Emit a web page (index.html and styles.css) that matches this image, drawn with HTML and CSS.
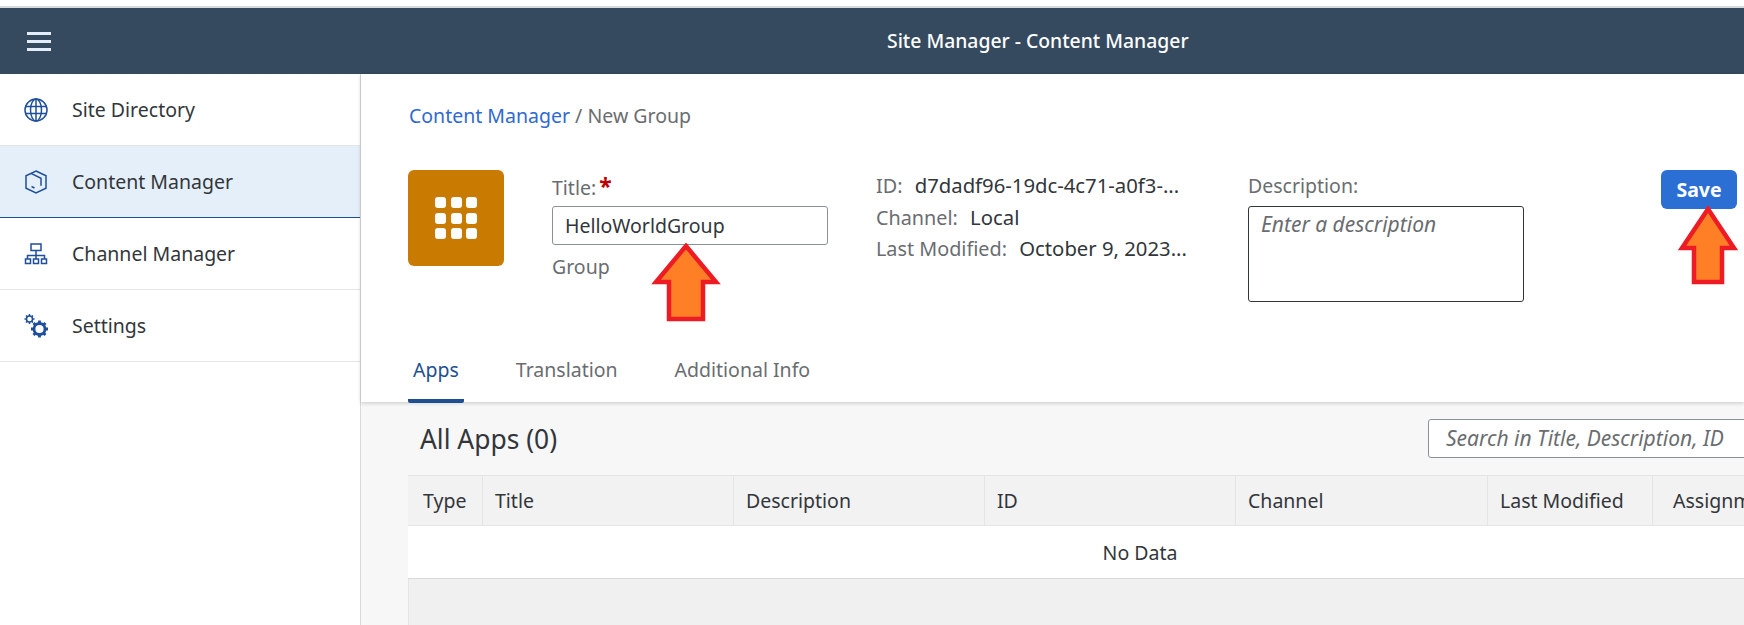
FILE: index.html
```html
<!DOCTYPE html>
<html lang="en">
<head>
  <meta charset="UTF-8" />
  <title>Site Manager - Content Manager</title>
  <link rel="stylesheet" href="styles.css">
</head>
<body>
  <div class="strip"></div>
  <header class="shell">
    <div class="burger"><span></span><span></span><span></span></div>
    <div class="shell-title">Site Manager - Content Manager</div>
  </header>

  <div class="layout">
    <nav class="sidebar">
      <a class="nav-item">
        <svg class="nav-icon" viewBox="0 0 24 24"><circle cx="12" cy="12" r="11"/><ellipse cx="12" cy="12" rx="5.5" ry="11"/><path d="M12 1v22M1.500 8.500h21M1.500 15.500h21"/></svg>
        Site Directory
      </a>
      <a class="nav-item selected">
        <svg class="nav-icon" viewBox="0 0 24 24"><path d="M12 1l10 4.800v12.400l-10 4.800-10-4.800V5.800z"/><path d="M7 3.400l10 4.900v7.400M7.500 16.500l3 1.500"/></svg>
        Content Manager
      </a>
      <a class="nav-item">
        <svg class="nav-icon" viewBox="0 0 24 24"><rect x="7" y="2" width="10" height="6.500"/><path d="M12 8.500v5M3.500 17v-3.500h17V17M12 13.500V17"/><rect x="1.500" y="17" width="5" height="4.500"/><rect x="9.500" y="17" width="5" height="4.500"/><rect x="17.500" y="17" width="5" height="4.500"/></svg>
        Channel Manager
      </a>
      <a class="nav-item">
        <svg class="nav-icon" viewBox="0 0 24 24"><circle cx="5.500" cy="5" r="3"/><path d="M5.500 0v2M5.500 8v2M.5 5h2M8.500 5h2M2 1.500l1.400 1.400M7.600 7.100L9 8.500M9 1.500L7.600 2.900M3.400 7.100L2 8.500"/><circle cx="15.500" cy="15" r="5.500" class="thick"/><path class="thick" d="M15.500 6.500v3M15.500 20.500v3M7 15h3M21 15h3M9.500 9l2.100 2.100M19.400 18.900l2.100 2.100M21.500 9l-2.100 2.100M11.600 18.900L9.500 21"/></svg>
        Settings
      </a>
    </nav>

    <main class="content">
      <section class="page-head">
        <div class="breadcrumb"><a>Content Manager</a> <span class="sep">/</span> <span>New Group</span></div>

        <div class="details">
          <div class="group-tile">
            <div class="tile-grid">
              <i></i><i></i><i></i><i></i><i></i><i></i><i></i><i></i><i></i>
            </div>
          </div>

          <div class="title-col">
            <label class="field-label">Title:<span class="req">*</span></label>
            <div class="input title-input">HelloWorldGroup</div>
            <div class="field-label group-type">Group</div>
          </div>

          <div class="meta-col">
            <div class="meta-row"><span class="field-label">ID:</span> d7dadf96-19dc-4c71-a0f3-...</div>
            <div class="meta-row"><span class="field-label">Channel:</span> Local</div>
            <div class="meta-row"><span class="field-label">Last Modified:</span> October 9, 2023...</div>
          </div>

          <div class="desc-col">
            <label class="field-label">Description:</label>
            <div class="desc-box">Enter a description</div>
          </div>

          <button class="save-btn">Save</button>
        </div>

        <div class="tabs">
          <a class="tab active">Apps</a>
          <a class="tab">Translation</a>
          <a class="tab">Additional Info</a>
        </div>
      </section>

      <section class="list-area">
        <div class="list-head">
          <h2>All Apps (0)</h2>
          <div class="input search">Search in Title, Description, ID</div>
        </div>
        <div class="table">
          <div class="thead">
            <div class="th w-type">Type</div>
            <div class="th w-title">Title</div>
            <div class="th w-desc">Description</div>
            <div class="th w-id">ID</div>
            <div class="th w-chan">Channel</div>
            <div class="th w-mod">Last Modified</div>
            <div class="th w-assign">Assignments</div>
          </div>
          <div class="no-data">No Data</div>
          <div class="table-foot"></div>
        </div>
      </section>
    </main>
  </div>

  <!-- red arrows drawn over the screenshot -->
  <svg class="arrow arrow-title" viewBox="0 0 70 80"><path d="M35 3L65 39H52V76H18V39H5z"/></svg>
  <svg class="arrow arrow-save" viewBox="0 0 60 80"><path d="M30 3L56 42H44V76H16V42H4z"/></svg>
</body>
</html>
```

FILE: styles.css
```css
* {
  box-sizing: border-box;
}

html, body {
  margin: 0;
  height: 625px;
  overflow: hidden;
}

body {
  font-family: "Noto Sans", "Open Sans", sans-serif;
  font-size: 19.5px;
  color: #32363a;
  background: #fff;
  position: relative;
}

.strip {
  height: 8px;
  border-bottom: 2px solid #d9d9d9;
}

.shell {
  height: 66px;
  background: #354a5f;
  display: flex;
  align-items: center;
  padding-left: 27px;
  color: #fff;
}

.burger {
  width: 24px;
  display: flex;
  flex-direction: column;
  gap: 5px;
}

.burger span {
  height: 3px;
  background: #e3edf9;
}

.shell-title {
  margin-left: 836px;
  margin-bottom: 2px;
  font-size: 19.35px;
  font-weight: 500;
}

.layout {
  display: flex;
  height: 551px;
}

.sidebar {
  width: 361px;
  flex: none;
  border-right: 1px solid #d9d9d9;
}

.nav-item {
  height: 72px;
  display: flex;
  align-items: center;
  gap: 24px;
  padding-left: 24px;
  border-bottom: 1px solid #e5e5e5;
}

.nav-item.selected {
  background: #e5eff9;
  border-bottom-color: #1d4f91;
}

.nav-icon {
  width: 24px;
  height: 24px;
  fill: none;
  stroke: #1f4f9c;
  stroke-width: 1.5;
}

.nav-icon .thick {
  stroke-width: 2.8;
}

.content {
  flex: 1;
  min-width: 0;
  display: flex;
  flex-direction: column;
}

.page-head {
  height: 328px;
  flex: none;
  padding-left: 47px;
  display: flex;
  flex-direction: column;
  box-shadow: 0 1px 4px rgba(0, 0, 0, 0.2);
  position: relative;
}

.breadcrumb {
  margin-top: 29px;
  height: 26px;
  line-height: 26px;
  color: #6a6d70;
  padding-left: 1px;
}

.breadcrumb a {
  color: #2f6ad0;
}

.details {
  display: flex;
  margin-top: 41px;
  height: 160px;
}

.group-tile {
  width: 96px;
  height: 96px;
  background: #c87b00;
  border-radius: 6px;
  display: flex;
  align-items: center;
  justify-content: center;
}

.tile-grid {
  display: grid;
  grid-template-columns: repeat(3, 11px);
  grid-auto-rows: 11px;
  gap: 4.5px;
}

.tile-grid i {
  background: #fff;
  border-radius: 3px;
}

.field-label {
  color: #6a6d70;
}

.title-col {
  width: 276px;
  margin-left: 48px;
}

.title-col .field-label:first-child {
  display: block;
  height: 36px;
  line-height: 32px;
}

.req {
  color: #bb0000;
  font-weight: 700;
  font-size: 23px;
  margin-left: 3px;
}

.input {
  border: 1px solid #89919a;
  border-radius: 3px;
  background: #fff;
  height: 39px;
  line-height: 37px;
  padding-left: 12px;
}

.group-type {
  margin-top: 9px;
  line-height: 26px;
}

.meta-col {
  width: 372px;
  margin-left: 48px;
  font-size: 20.3px;
}

.meta-row {
  height: 31.5px;
  line-height: 31px;
  white-space: nowrap;
}

.meta-row .field-label {
  font-size: 19.8px;
  margin-right: 7px;
}

.desc-col {
  width: 276px;
}

.desc-col .field-label {
  display: block;
  height: 36px;
  line-height: 32px;
}

.desc-box {
  height: 96px;
  border: 1px solid #32363a;
  border-radius: 3px;
  padding: 3px 12px;
  font-size: 21px;
  font-style: italic;
  color: #6a6d70;
}

.save-btn {
  margin-left: 137px;
  width: 76px;
  height: 39px;
  background: #2b6fd4;
  color: #fff;
  border: none;
  border-radius: 6px;
  font: 700 19.5px "Noto Sans", sans-serif;
}

.tabs {
  display: flex;
  gap: 47px;
  margin-top: auto;
  margin-bottom: -1px;
}

.tab {
  position: relative;
  padding: 0 5px;
  height: 56px;
  line-height: 45px;
  color: #6a6d70;
}

.tab.active {
  color: #1d4f91;
  border-bottom: 4px solid #1d4f91;
  border-radius: 0 0 2px 2px;
}

.list-area {
  flex: 1;
  background: #f7f7f7;
  padding-left: 47px;
  min-height: 0;
}

.list-head {
  height: 73px;
  display: flex;
  align-items: center;
  justify-content: space-between;
  padding-left: 12px;
}

.list-head h2 {
  margin: 0;
  font-size: 26.4px;
  font-weight: 400;
}

.search {
  width: 400px;
  flex: none;
  margin-right: -84px;
  padding-left: 17px;
  font-size: 21px;
  font-style: italic;
  color: #6a6d70;
}

.table {
  width: 1464px;
}

.thead {
  display: flex;
  height: 51px;
  background: #f2f2f2;
  border-top: 1px solid #e5e5e5;
  border-bottom: 1px solid #e5e5e5;
}

.th {
  flex: none;
  line-height: 49px;
  padding-left: 12px;
  border-right: 1px solid #e5e5e5;
  white-space: nowrap;
}

.w-type { width: 75px; padding-left: 15px; }
.w-title { width: 251px; }
.w-desc { width: 251px; }
.w-id { width: 251px; }
.w-chan { width: 252px; }
.w-mod { width: 165px; }
.w-assign { width: 219px; padding-left: 20px; border-right: none; }

.no-data {
  height: 53px;
  line-height: 53px;
  background: #fff;
  text-align: center;
  border-bottom: 1px solid #d9d9d9;
}

.table-foot {
  height: 46px;
  background: #f0f0f0;
  border-left: 1px solid #e5e5e5;
}

.arrow {
  position: absolute;
  fill: #ff7f27;
  stroke: #ed1c24;
  stroke-width: 4.5;
  stroke-linejoin: miter;
}

.arrow-title {
  left: 651px;
  top: 243px;
  width: 70px;
  height: 80px;
}

.arrow-save {
  left: 1678px;
  top: 206px;
  width: 60px;
  height: 80px;
}
```
